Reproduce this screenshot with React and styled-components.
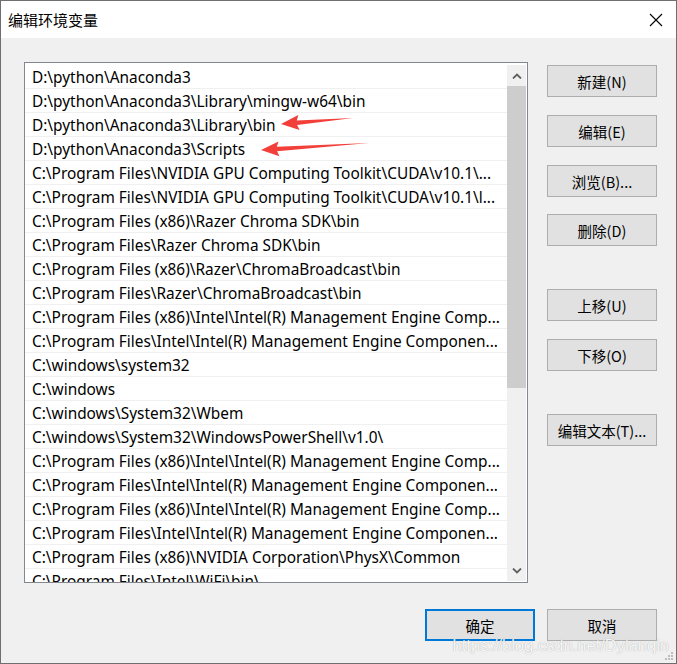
import React from "react";
import styled, { createGlobalStyle } from "styled-components";

const GlobalStyle = createGlobalStyle`
  html, body {
    margin: 0;
    padding: 0;
    background: #f0f0f0;
  }
  * {
    box-sizing: border-box;
  }
`;

const Window = styled.div`
  position: relative;
  width: 677px;
  height: 664px;
  border: 1px solid #6f6f6f;
  background: #f0f0f0;
  display: flex;
  flex-direction: column;
  font-family: "Noto Sans", "Noto Sans CJK SC", sans-serif;
  font-size: 15.4px;
  color: #000;
  overflow: hidden;
`;

const TitleBar = styled.div`
  height: 37px;
  flex: none;
  background: #fff;
  display: flex;
  align-items: center;
  justify-content: space-between;
  padding: 0 0 0 7px;
`;

const Title = styled.span`
  font-family: "Noto Sans CJK SC", sans-serif;
  font-size: 15px;
  padding-bottom: 1px;
`;

const CloseButton = styled.div`
  width: 46px;
  height: 37px;
  display: flex;
  align-items: center;
  justify-content: center;
  margin-right: -3px;
`;

const Body = styled.div`
  flex: 1;
  display: flex;
  flex-direction: column;
  padding: 24px 19px 22px 23px;
`;

const Main = styled.div`
  display: flex;
  gap: 19px;
`;

const ListBox = styled.div`
  position: relative;
  width: 504px;
  height: 521px;
  border: 1px solid #828790;
  background: #fff;
  display: flex;
  overflow: hidden;
`;

const Rows = styled.div`
  flex: 1;
  min-width: 0;
  padding-top: 2px;
`;

const Row = styled.div`
  height: 24px;
  line-height: 25px;
  padding-left: 7px;
  padding-right: 4px;
  white-space: nowrap;
  overflow: hidden;
  border-bottom: 1px solid #f0f0f0;
`;

const ScrollBar = styled.div`
  width: 19px;
  margin: 2px 1px 1px 0;
  background: #f0f0f0;
  display: flex;
  flex-direction: column;
`;

const ScrollArrow = styled.div`
  height: 21px;
  flex: none;
  display: flex;
  align-items: center;
  justify-content: center;
`;

const Thumb = styled.div`
  height: 302px;
  background: #cdcdcd;
`;

const Track = styled.div`
  flex: 1;
`;

const ButtonColumn = styled.div`
  display: flex;
  flex-direction: column;
  gap: 18px;
  padding-top: 3px;
`;

const Button = styled.div`
  width: 110px;
  height: 32px;
  flex: none;
  display: flex;
  align-items: center;
  justify-content: center;
  background: #e1e1e1;
  border: ${(p) => (p.$primary ? "2px solid #0078d7" : "1px solid #adadad")};
  font-family: "Noto Sans CJK SC", sans-serif;
  font-size: 14.5px;
  margin-top: ${(p) => p.$push || 0}px;
`;

const Footer = styled.div`
  display: flex;
  justify-content: flex-end;
  gap: 12px;
  margin-top: 26px;
`;

const Annotation = styled.svg`
  position: absolute;
  left: 0;
  top: 0;
  pointer-events: none;
`;

const Watermark = styled.div`
  position: absolute;
  right: 7px;
  bottom: 8px;
  font-family: "Liberation Sans", Arial, sans-serif;
  font-size: 16.5px;
  color: rgba(255, 255, 255, 0.92);
  text-shadow: 0 0 1px rgba(100, 100, 100, 0.6);
`;

const Grip = styled.svg`
  position: absolute;
  right: 2px;
  bottom: 2px;
`;

const paths = [
  "D:\\python\\Anaconda3",
  "D:\\python\\Anaconda3\\Library\\mingw-w64\\bin",
  "D:\\python\\Anaconda3\\Library\\bin",
  "D:\\python\\Anaconda3\\Scripts",
  "C:\\Program Files\\NVIDIA GPU Computing Toolkit\\CUDA\\v10.1\\...",
  "C:\\Program Files\\NVIDIA GPU Computing Toolkit\\CUDA\\v10.1\\l...",
  "C:\\Program Files (x86)\\Razer Chroma SDK\\bin",
  "C:\\Program Files\\Razer Chroma SDK\\bin",
  "C:\\Program Files (x86)\\Razer\\ChromaBroadcast\\bin",
  "C:\\Program Files\\Razer\\ChromaBroadcast\\bin",
  "C:\\Program Files (x86)\\Intel\\Intel(R) Management Engine Comp...",
  "C:\\Program Files\\Intel\\Intel(R) Management Engine Componen...",
  "C:\\windows\\system32",
  "C:\\windows",
  "C:\\windows\\System32\\Wbem",
  "C:\\windows\\System32\\WindowsPowerShell\\v1.0\\",
  "C:\\Program Files (x86)\\Intel\\Intel(R) Management Engine Comp...",
  "C:\\Program Files\\Intel\\Intel(R) Management Engine Componen...",
  "C:\\Program Files (x86)\\Intel\\Intel(R) Management Engine Comp...",
  "C:\\Program Files\\Intel\\Intel(R) Management Engine Componen...",
  "C:\\Program Files (x86)\\NVIDIA Corporation\\PhysX\\Common",
  "C:\\Program Files\\Intel\\WiFi\\bin\\",
];

const sideButtons = [
  { label: "新建(N)" },
  { label: "编辑(E)" },
  { label: "浏览(B)..." },
  { label: "删除(D)", push: -1 },
  { label: "上移(U)", push: 25 },
  { label: "下移(O)" },
  { label: "编辑文本(T)...", push: 25 },
];

// red marker arrow, tip on the left, tapering tail to the right
function Arrow({ tipX, tipY, tailX, tailY }) {
  const dx = tailX - tipX;
  const dy = tailY - tipY;
  const len = Math.hypot(dx, dy);
  const ux = dx / len;
  const uy = dy / len;
  const nx = -uy;
  const ny = ux;
  const head = 18;
  const bx = tipX + ux * head;
  const by = tipY + uy * head;
  const pt = (x, y) => `${x.toFixed(1)},${y.toFixed(1)}`;
  const points = [
    pt(tipX, tipY),
    pt(bx + nx * 7.5, by + ny * 7.5),
    pt(bx - ux * 2 + nx * 2.2, by - uy * 2 + ny * 2.2),
    pt(tailX, tailY),
    pt(bx - ux * 2 - nx * 2.2, by - uy * 2 - ny * 2.2),
    pt(bx - nx * 7.5, by - ny * 7.5),
  ].join(" ");
  return <polygon points={points} fill="#f23f3a" />;
}

export default function App() {
  return (
    <>
      <GlobalStyle />
      <Window>
        <TitleBar>
          <Title>编辑环境变量</Title>
          <CloseButton>
            <svg width="14" height="14" viewBox="0 0 14 14">
              <path d="M1 1 L13 13 M13 1 L1 13" stroke="#000" strokeWidth="1.1" />
            </svg>
          </CloseButton>
        </TitleBar>
        <Body>
          <Main>
            <ListBox>
              <Rows>
                {paths.map((p, i) => (
                  <Row key={i}>{p}</Row>
                ))}
              </Rows>
              <ScrollBar>
                <ScrollArrow>
                  <svg width="10" height="6" viewBox="0 0 10 6">
                    <path d="M1 5.5 L5 1.5 L9 5.5" stroke="#606060" strokeWidth="1.8" fill="none" />
                  </svg>
                </ScrollArrow>
                <Thumb />
                <Track />
                <ScrollArrow>
                  <svg width="10" height="6" viewBox="0 0 10 6">
                    <path d="M1 0.5 L5 4.5 L9 0.5" stroke="#606060" strokeWidth="1.8" fill="none" />
                  </svg>
                </ScrollArrow>
              </ScrollBar>
            </ListBox>
            <ButtonColumn>
              {sideButtons.map((b) => (
                <Button key={b.label} $push={b.push}>
                  {b.label}
                </Button>
              ))}
            </ButtonColumn>
          </Main>
          <Footer>
            <Button $primary>确定</Button>
            <Button>取消</Button>
          </Footer>
        </Body>
        <Annotation width="677" height="664">
          <Arrow tipX={280} tipY={123} tailX={352} tailY={117} />
          <Arrow tipX={260} tipY={149} tailX={368} tailY={142} />
        </Annotation>
        <Watermark>https://blog.csdn.net/Dylanqin</Watermark>
        <Grip width="10" height="10" viewBox="0 0 10 10">
          <rect x="7" y="1" width="2" height="2" fill="#bdbdbd" />
          <rect x="4" y="4" width="2" height="2" fill="#bdbdbd" />
          <rect x="7" y="4" width="2" height="2" fill="#bdbdbd" />
          <rect x="1" y="7" width="2" height="2" fill="#bdbdbd" />
          <rect x="4" y="7" width="2" height="2" fill="#bdbdbd" />
          <rect x="7" y="7" width="2" height="2" fill="#bdbdbd" />
        </Grip>
      </Window>
    </>
  );
}
